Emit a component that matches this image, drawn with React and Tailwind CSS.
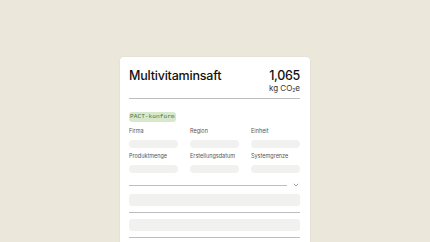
export default function App() {
  const Label = ({ children }) => (
    <div className="text-[5.5px] leading-[7px] text-[#555]">{children}</div>
  );
  const Field = () => <div className="mt-[5px] h-2 rounded-full bg-[#f1f2ef]" />;
  return (
    <div
      className="w-[430px] h-[242px] overflow-hidden bg-[#ebe7da] flex justify-center pt-[57px]"
      style={{ fontFamily: "Inter, 'Liberation Sans', sans-serif" }}
    >
      <div className="w-[190px] h-[220px] bg-white rounded-[4px] shadow-[0_0_2px_rgba(0,0,0,0.08)] px-[9px] pr-[10px] pt-[11px]">
        <div className="flex justify-between">
          <div className="text-[12.5px] leading-[16px] font-medium text-[#111] tracking-[-0.2px]">Multivitaminsaft</div>
          <div className="flex flex-col items-end">
            <div className="text-[12.5px] leading-[16px] font-medium text-[#111] tracking-[-0.3px]">1,065</div>
            <div className="text-[8px] leading-[8px] text-[#333]">
              kg CO<sub className="text-[5px] align-baseline relative top-[1px]">2</sub>e
            </div>
          </div>
        </div>
        <div className="mt-[6px] h-px bg-[#bdbdbd]" />
        <div className="mt-[13px] flex">
          <div
            className="h-[10px] px-[1px] whitespace-nowrap rounded-[3px] bg-[#d7e9cc] text-[6.2px] leading-[10px] text-[#56704b]"
            style={{ fontFamily: "'Liberation Mono', monospace" }}
          >
            PACT-konform
          </div>
        </div>
        <div className="mt-[6px] grid grid-cols-3 gap-x-[12px]">
          <div><Label>Firma</Label><Field /></div>
          <div><Label>Region</Label><Field /></div>
          <div><Label>Einheit</Label><Field /></div>
        </div>
        <div className="mt-[5px] grid grid-cols-3 gap-x-[12px]">
          <div><Label>Produktmenge</Label><Field /></div>
          <div><Label>Erstellungsdatum</Label><Field /></div>
          <div><Label>Systemgrenze</Label><Field /></div>
        </div>
        <div className="mt-[10px] flex items-center gap-[6px]">
          <div className="flex-1 h-px bg-[#bdbdbd]" />
          <svg width="6" height="4" viewBox="0 0 6 4" className="mr-[1px]">
            <path d="M0.8 0.8 L3 3 L5.2 0.8" fill="none" stroke="#888" strokeWidth="0.8" />
          </svg>
        </div>
        <div className="mt-[7px] h-[12px] rounded-[3px] bg-[#f1f2ef]" />
        <div className="mt-[6px] h-px bg-[#bdbdbd]" />
        <div className="mt-[6px] h-[12px] rounded-[3px] bg-[#f1f2ef]" />
        <div className="mt-[6px] h-px bg-[#bdbdbd]" />
      </div>
    </div>
  );
}
